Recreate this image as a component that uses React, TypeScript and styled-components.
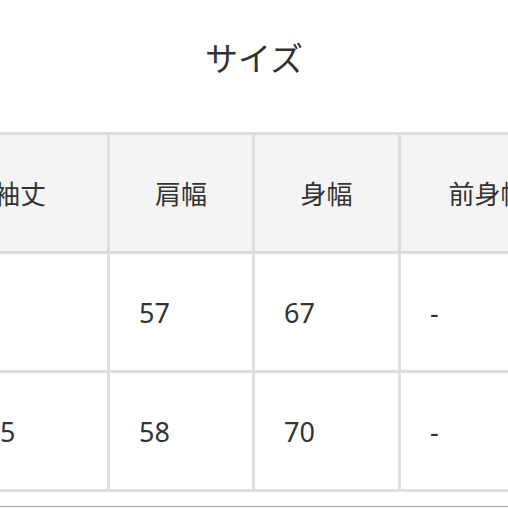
import React from "react";
import styled, { createGlobalStyle } from "styled-components";

const GlobalStyle = createGlobalStyle`
  html, body {
    margin: 0;
    padding: 0;
    background: #ffffff;
  }
  body {
    font-family: "Noto Sans", "Noto Sans CJK JP", sans-serif;
    color: #333333;
  }
`;

const Page = styled.div`
  width: 508px;
  height: 508px;
  overflow: hidden;
  display: flex;
  flex-direction: column;
`;

const Title = styled.h2`
  margin: 0;
  height: 132px;
  display: flex;
  justify-content: center;
  padding-top: 37px;
  box-sizing: border-box;
  font-size: 33px;
  font-weight: 400;
  line-height: 44px;
  color: #333333;
`;

const TableWrap = styled.div`
  overflow: hidden;
  flex: 1;
`;

const Table = styled.table`
  margin-left: -70px;
  border-collapse: collapse;
  table-layout: fixed;
  width: 644px;
`;

const Row = styled.tr`
  height: 119px;
`;

const HeadCell = styled.th`
  border: 3px solid #dedede;
  background: #f4f4f4;
  font-size: 26px;
  font-weight: 400;
  text-align: center;
  vertical-align: middle;
  color: #333333;
  padding: 0;
  white-space: nowrap;
`;

const Cell = styled.td`
  border: 3px solid #dedede;
  background: #ffffff;
  font-size: 27px;
  text-align: left;
  padding: 0 0 0 29px;
  vertical-align: middle;
  color: #333333;
`;

const BottomLine = styled.div`
  height: 1px;
  background: #9e9e9e;
  margin-top: 14px;
`;

const headers = ["袖丈", "肩幅", "身幅", "前身幅"];
const rows = [
  ["21", "57", "67", "-"],
  ["22.5", "58", "70", "-"],
];

const App: React.FC = () => {
  return (
    <Page>
      <GlobalStyle />
      <Title>サイズ</Title>
      <TableWrap>
        <Table>
          <colgroup>
            <col style={{ width: 177 }} />
            <col style={{ width: 145 }} />
            <col style={{ width: 146 }} />
            <col style={{ width: 176 }} />
          </colgroup>
          <thead>
            <Row>
              {headers.map(h => <HeadCell key={h}>{h}</HeadCell>)}
            </Row>
          </thead>
          <tbody>
            {rows.map((r, i) => (
              <Row key={`row_${i}`}>
                {r.map((v, j) => <Cell key={`cell_${i}_${j}`}>{v}</Cell>)}
              </Row>
            ))}
          </tbody>
        </Table>
        <BottomLine />
      </TableWrap>
    </Page>
  );
};

export default App;
